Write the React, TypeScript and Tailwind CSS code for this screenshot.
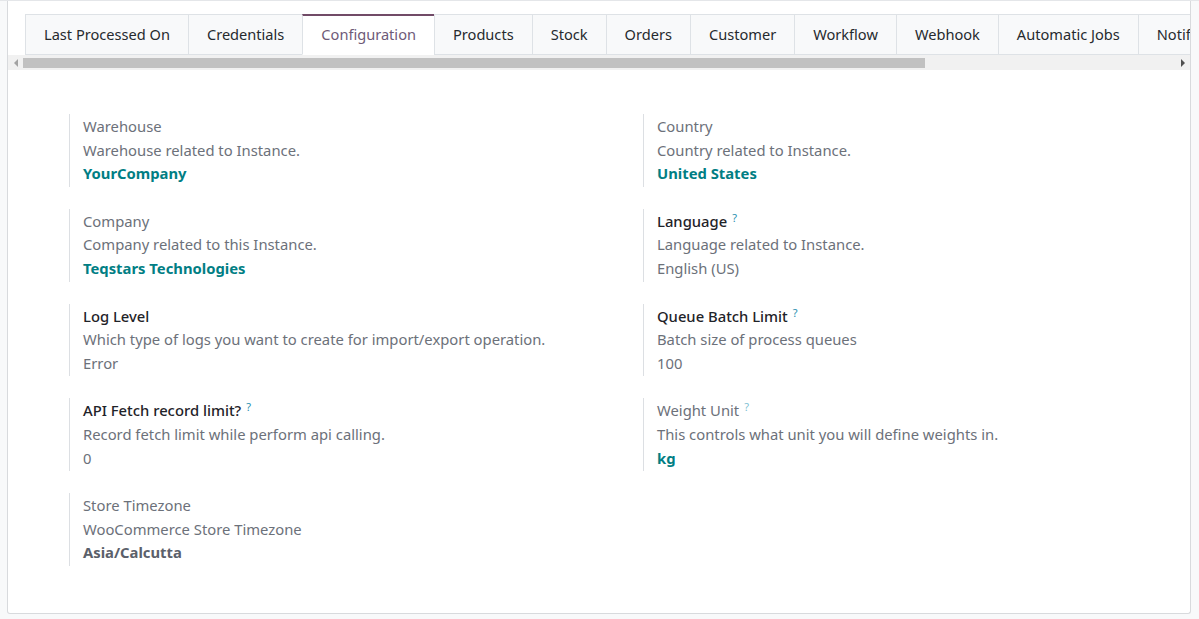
import React from "react";

const tabs = [
  "Last Processed On",
  "Credentials",
  "Configuration",
  "Products",
  "Stock",
  "Orders",
  "Customer",
  "Workflow",
  "Webhook",
  "Automatic Jobs",
  "Notifications",
];

type Field = {
  label: string;
  strong?: boolean;
  help?: boolean;
  desc: string;
  value: string;
  kind: "link" | "plain" | "bold";
};

const left: Field[] = [
  { label: "Warehouse", desc: "Warehouse related to Instance.", value: "YourCompany", kind: "link" },
  { label: "Company", desc: "Company related to this Instance.", value: "Teqstars Technologies", kind: "link" },
  { label: "Log Level", strong: true, desc: "Which type of logs you want to create for import/export operation.", value: "Error", kind: "plain" },
  { label: "API Fetch record limit?", strong: true, help: true, desc: "Record fetch limit while perform api calling.", value: "0", kind: "plain" },
  { label: "Store Timezone", desc: "WooCommerce Store Timezone", value: "Asia/Calcutta", kind: "bold" },
];

const right: Field[] = [
  { label: "Country", desc: "Country related to Instance.", value: "United States", kind: "link" },
  { label: "Language", strong: true, help: true, desc: "Language related to Instance.", value: "English (US)", kind: "plain" },
  { label: "Queue Batch Limit", strong: true, help: true, desc: "Batch size of process queues", value: "100", kind: "plain" },
  { label: "Weight Unit", help: true, desc: "This controls what unit you will define weights in.", value: "kg", kind: "link" },
];

function FieldBlock({ f }: { f: Field }) {
  return (
    <div className="border-l border-[#dcdfe3] pl-[13px] py-[1px] leading-[23.6px]">
      <div className="flex items-start h-[23.6px]">
        <span className={f.strong ? "text-[#1f2329] font-medium" : "text-[#6c717a]"}>{f.label}</span>
        {f.help && (
          <span className={"ml-[5px] mt-[2px] text-[11px] leading-none " + (f.strong ? "text-[#2a8fb0]" : "text-[#7fbfd4]")}>?</span>
        )}
      </div>
      <div className="text-[#6c717a]">{f.desc}</div>
      <div
        className={
          f.kind === "link"
            ? "text-[#017e84] font-bold"
            : f.kind === "bold"
            ? "text-[#5b606a] font-bold"
            : "text-[#6c717a]"
        }
      >
        {f.value}
      </div>
    </div>
  );
}

export default function App() {
  return (
    <div
      className="w-[1199px] h-[619px] bg-[#f8f9fa] border-t border-[#e4e6e9] overflow-hidden text-[14.8px]"
      style={{ fontFamily: '"Noto Sans", "Open Sans", sans-serif' }}
    >
      <div className="ml-[7px] w-[1184px] h-[613px] bg-white border-x border-b border-[#d8dadd] rounded-b-[3px] flex flex-col">
        <div className="overflow-hidden pt-[13px] pl-[17px]">
          <div className="flex flex-nowrap w-max border-b border-[#dee2e6]">
            {tabs.map((t) => {
              const active = t === "Configuration";
              return (
                <div
                  key={t}
                  className={
                    "shrink-0 h-[41px] -mb-px flex items-center px-[18px] whitespace-nowrap border-l border-r border-[#dee2e6] -mr-px text-[14.6px] " +
                    (active
                      ? "bg-white border-t-[2px] border-t-[#714b67] text-[#6e5a78] border-b border-b-white"
                      : "bg-[#f8f9fa] border-t border-t-[#dee2e6] text-[#262a2e] border-b border-b-[#dee2e6]")
                  }
                >
                  {t}
                </div>
              );
            })}
          </div>
        </div>
        <div className="h-[15px] bg-[#f1f1f1] flex items-center">
          <div className="w-[15px] flex items-center justify-center">
            <div className="w-0 h-0 border-y-[4px] border-y-transparent border-r-[4px] border-r-[#a3a3a3]" />
          </div>
          <div className="w-[902px] h-[10px] bg-[#c1c1c1]" />
          <div className="flex-1" />
          <div className="w-[15px] flex items-center justify-center">
            <div className="w-0 h-0 border-y-[4px] border-y-transparent border-l-[4px] border-l-[#505050]" />
          </div>
        </div>
        <div className="pt-[44px] pl-[61px] grid grid-cols-[574px_574px]">
          <div className="flex flex-col gap-[22px]">
            {left.map((f) => (
              <FieldBlock key={f.label} f={f} />
            ))}
          </div>
          <div className="flex flex-col gap-[22px]">
            {right.map((f) => (
              <FieldBlock key={f.label} f={f} />
            ))}
          </div>
        </div>
      </div>
    </div>
  );
}
